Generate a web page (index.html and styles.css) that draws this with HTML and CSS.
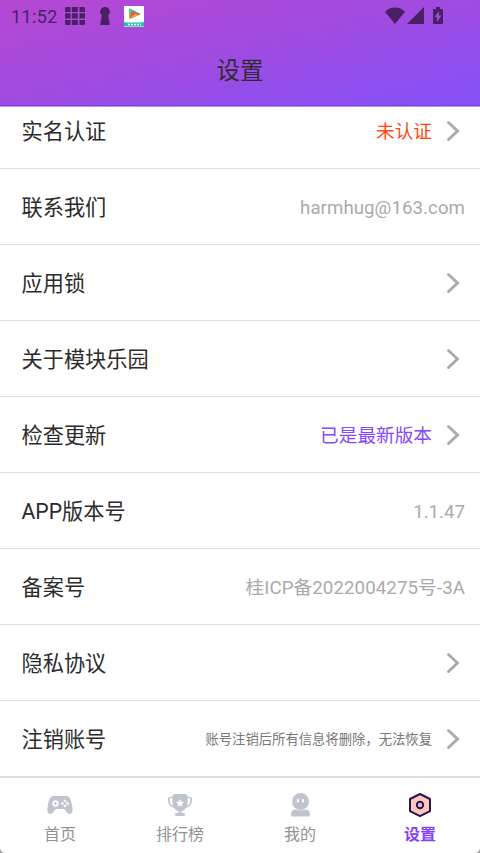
FILE: index.html
```html
<!DOCTYPE html>
<html lang="zh-CN">
<head>
<meta charset="utf-8">
<meta name="viewport" content="width=device-width, initial-scale=1">
<title>设置</title>
<link rel="stylesheet" href="styles.css">
</head>
<body>
<div class="app">
  <header class="header">
    <div class="status">
      <span class="clock">11:52</span>
      <svg class="grid-icon" width="20" height="18" viewBox="0 0 20 18" fill="#492064"><path d="M1 0h4.500v5H0V1zM6.800 0h6v5h-6zM14.500 0H19l1 1v4h-5.500zM0 6.300h5.500v5.200H0zM6.800 6.300h6v5.200h-6zM14.500 6.300H20v5.200h-5.500zM0 13h5.500v5H1l-1-1zM6.800 13h6v5h-6zM14.500 13H20v4l-1 1h-4.500z"/></svg>
      <svg class="key-icon" width="10" height="18" viewBox="0 0 10 18" fill="#492064"><path d="M5 0a4.700 4.700 0 0 1 3.200 8.200L9.800 17.500l-.5.500H.7l-.5-.5L1.800 8.200A4.700 4.700 0 0 1 5 0z"/></svg>
      <svg class="play-icon" width="20" height="21" viewBox="0 0 20 21"><path fill="#fff" d="M0 0h20v21H0z"/><path fill="#62c78b" d="M5 2v11l6-5.500z"/><path fill="#35b9a5" d="m5 2 12 6-5 2z"/><path fill="#f25b38" d="m7 5 9 3.500L6 13z"/><path fill="#f6a44d" d="m5 13 6-5 4 1z"/><path fill="#24c4a2" d="M0 16l3 .5h14l3-.5v4.500H0z"/><path stroke="#e8fff9" stroke-width="1.500" stroke-dasharray="2 1" d="M4 18.500h13"/></svg>
      <svg class="signals" width="60" height="19" viewBox="0 0 60 19" fill="#492064"><path d="M0 4.700C5.700-.8 14.300-.8 20 4.700L10 17z"/><path d="M22 17 39 0v17z"/><path d="M51 0h4v2h2a1 1 0 0 1 1 1v13a1 1 0 0 1-1 1h-8a1 1 0 0 1-1-1V3a1 1 0 0 1 1-1h2z"/><path fill="#a24ade" d="m54 4-4.500 6H52v5l4.500-6.500H54z"/></svg>
    </div>
    <h1 class="title">设置</h1>
  </header>
  <main class="list">
    <div class="row"><span class="label">实名认证</span><span class="value warn">未认证</span><svg class="chevron" width="14" height="22" viewBox="0 0 14 22"><path d="M2.500 2.500 11.500 11l-9 8.500"/></svg></div>
    <div class="row"><span class="label">联系我们</span><span class="value latin mail">harmhug@163.com</span></div>
    <div class="row"><span class="label">应用锁</span><svg class="chevron" width="14" height="22" viewBox="0 0 14 22"><path d="M2.500 2.500 11.500 11l-9 8.500"/></svg></div>
    <div class="row"><span class="label">关于模块乐园</span><svg class="chevron" width="14" height="22" viewBox="0 0 14 22"><path d="M2.500 2.500 11.500 11l-9 8.500"/></svg></div>
    <div class="row"><span class="label">检查更新</span><span class="value accent">已是最新版本</span><svg class="chevron" width="14" height="22" viewBox="0 0 14 22"><path d="M2.500 2.500 11.500 11l-9 8.500"/></svg></div>
    <div class="row"><span class="label">APP版本号</span><span class="value latin">1.1.47</span></div>
    <div class="row"><span class="label">备案号</span><span class="value record">桂ICP备2022004275号-3A</span></div>
    <div class="row"><span class="label">隐私协议</span><svg class="chevron" width="14" height="22" viewBox="0 0 14 22"><path d="M2.500 2.500 11.500 11l-9 8.500"/></svg></div>
    <div class="row"><span class="label">注销账号</span><span class="value note">账号注销后所有信息将删除，无法恢复</span><svg class="chevron" width="14" height="22" viewBox="0 0 14 22"><path d="M2.500 2.500 11.500 11l-9 8.500"/></svg></div>
  </main>
  <nav class="tabs">
    <a class="tab">
      <svg width="28" height="26" viewBox="0 0 28 26"><path fill="#bfc4cf" d="M7 4c2-.8 3.500 0 5 0h4c1.500 0 3-.8 5 0 3.500 1 4.500 5 5.500 12 .6 4-1 6-3 6-3 0-3.500-5-6-5h-7c-2.500 0-3 5-6 5-2 0-3.600-2-3-6C2.500 9 3.500 5 7 4z"/><circle cx="9.500" cy="11.500" r="3.200" fill="#fff"/><path stroke="#bfc4cf" d="M9.500 10v3M8 11.500h3"/><g fill="#fff"><circle cx="19" cy="9" r="1.300"/><circle cx="19" cy="14" r="1.300"/><circle cx="16.500" cy="11.500" r="1.300"/><circle cx="21.500" cy="11.500" r="1.300"/></g></svg>
      <span>首页</span>
    </a>
    <a class="tab">
      <svg width="28" height="26" viewBox="0 0 28 26"><path fill="none" stroke="#bfc4cf" stroke-width="1.700" d="M8 5.500H4c-1.500 0-1.200 2-1 4 .4 3.200 2 5 5.500 5.500M20 5.500h4c1.500 0 1.200 2 1 4-.4 3.200-2 5-5.500 5.500"/><path fill="#bfc4cf" d="M9 2h10c1.600 0 2.500 1 2.500 2.500V11c0 4-2.500 7.500-6 8v2h2.500c1.500 0 1.500 3 0 3h-8c-1.500 0-1.500-3 0-3h2.500v-2c-3.500-.5-6-4-6-8V4.500C6.500 3 7.400 2 9 2z"/><path fill="#fff" d="m14 7 1.200 2.600 2.800.4-2 1.900.5 2.800-2.500-1.400-2.500 1.400.5-2.800-2-1.900 2.800-.4z"/></svg>
      <span>排行榜</span>
    </a>
    <a class="tab">
      <svg width="28" height="26" viewBox="0 0 28 26"><circle cx="14.500" cy="9.500" r="8.500" fill="#bfc4cf"/><path fill="#bfc4cf" d="M9 17.500h11c2.500 0 4 2 4 5 0 1.500-.5 2-2 2H7c-1.500 0-2-.5-2-2 0-3 1.500-5 4-5z"/><path fill="none" stroke="#fff" stroke-opacity=".6" stroke-width=".6" d="M8 16.800c4 2 9 2 13 0"/><rect x="11" y="7" width="2" height="3.500" rx=".8" fill="#fff"/><rect x="16" y="7" width="2" height="3.500" rx=".8" fill="#fff"/></svg>
      <span>我的</span>
    </a>
    <a class="tab active">
      <svg width="28" height="26" viewBox="0 0 28 26"><path fill="#ffc6bd" stroke="#231650" stroke-width="2" stroke-linejoin="round" d="M14 2 24 7v12.200L14 24.200 4 19.200V7z"/><circle cx="14" cy="13" r="3.200" fill="#ffb5ae" stroke="#231650" stroke-width="1.900"/></svg>
      <span>设置</span>
    </a>
  </nav>
</div>
</body>
</html>
```
FILE: styles.css
```css
* { box-sizing: border-box; }
body {
  margin: 0;
  background: #999;
  font-family: Roboto, "Noto Sans CJK SC", sans-serif;
}
.app {
  display: flex;
  flex-direction: column;
  width: 480px;
  height: 853px;
  overflow: hidden;
  background: #fff;
  border-radius: 0 0 5px 5px;
}
.header {
  flex: none;
  height: 107px;
  background: linear-gradient(to bottom right, #b648d2 0%, #a14bdf 45%, #8351f8 100%);
  border-bottom: 1px solid #bb95f7;
  box-shadow: inset 0 -1px #7a3ee6;
}
.status {
  display: flex;
  align-items: center;
  height: 32px;
  padding: 0 35px 0 11px;
  color: #492064;
}
.clock {
  width: 54px;
  font-size: 18px;
  letter-spacing: .4px;
  line-height: 32px;
  margin-top: 2px;
}
.key-icon { margin-left: 15px; }
.play-icon { margin-left: 14px; }
.signals { margin-left: auto; }
.title {
  margin: 22px 0 0;
  font-size: 23.500px;
  font-weight: 400;
  line-height: 35px;
  color: #302a36;
  text-align: center;
}
.list {
  flex: none;
  display: flex;
  flex-direction: column;
  justify-content: flex-end;
  height: 670px;
  overflow: hidden;
}
.row {
  flex: none;
  display: flex;
  align-items: center;
  height: 76px;
  padding: 0 15px 0 21.500px;
  border-bottom: 1.500px solid #dedede;
}
.label {
  margin: 0 auto 2px 0;
  font-size: 21.200px;
  color: #2b2b2b;
}
.value {
  margin-bottom: 2px;
  font-size: 18.670px;
  color: #aaa;
}
.latin { margin: 2px 0 0; }
.mail { letter-spacing: .06px; }
.record { letter-spacing: .1px; }
.warn { color: #ff4810; }
.accent { color: #8548fa; }
.note { margin-bottom: 0; font-size: 13.330px; color: #777; }
.chevron {
  margin: 0 5px 0 14px;
  fill: none;
  stroke: #aaa;
  stroke-width: 2.900;
  stroke-linecap: round;
}
.tabs {
  display: grid;
  grid-template-columns: repeat(4, 1fr);
  flex: 1;
  border-top: 1px solid #dedede;
}
.tab {
  display: flex;
  flex-direction: column;
  align-items: center;
  padding-top: 14px;
  font-size: 16px;
  line-height: 24px;
  color: #929292;
}
.tab span { margin-top: 5px; }
.active { color: #8542f5; font-weight: 700; }
```
